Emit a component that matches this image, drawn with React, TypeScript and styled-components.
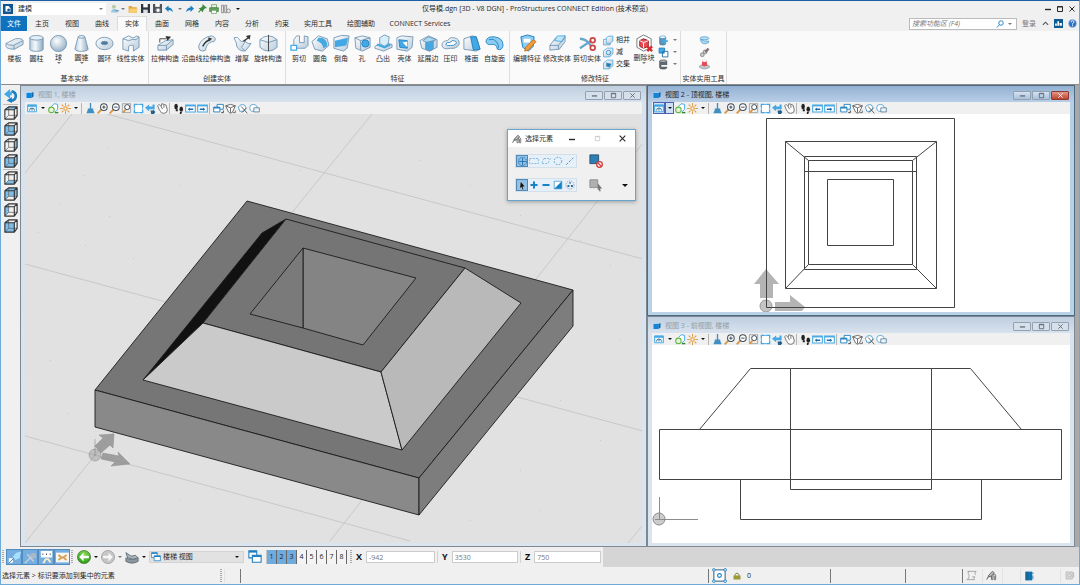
import React from "react";
import styled, { createGlobalStyle, css } from "styled-components";

const GlobalStyle = createGlobalStyle`
  *, *::before, *::after { box-sizing: border-box; }
  html, body { margin: 0; padding: 0; }
  body {
    font-family: "Open Sans", "Noto Sans CJK SC", sans-serif;
    font-size: 7px;
    line-height: 10px;
    color: #2a2a2a;
    background: #f0f0f0;
  }
  button, input, select { font: inherit; color: inherit; margin: 0; padding: 0; border: 0; background: none; }
  h1, h2 { margin: 0; font: inherit; }
`;

/* ------------------------------------------------------------------ */
/* Icons                                                              */
/* ------------------------------------------------------------------ */

const outline = "#6f93b0";
const sky = "#43a8e4";
const deep = "#1c7fc0";

const GradientDefs = () => (
  <HiddenSvg aria-hidden="true">
    <defs>
      <linearGradient id="steel" x1="0" y1="0" x2="1" y2="1">
        <stop offset="0" stopColor="#ffffff" />
        <stop offset="1" stopColor="#b7cbdb" />
      </linearGradient>
      <linearGradient id="tube" x1="0" y1="0" x2="1" y2="0">
        <stop offset="0" stopColor="#b4cadb" />
        <stop offset="0.4" stopColor="#f4f9fc" />
        <stop offset="1" stopColor="#8fabc1" />
      </linearGradient>
      <radialGradient id="ball" cx="0.4" cy="0.35" r="0.7">
        <stop offset="0" stopColor="#ffffff" />
        <stop offset="1" stopColor="#93aec4" />
      </radialGradient>
      <radialGradient id="green" cx="0.5" cy="0.3" r="0.7">
        <stop offset="0" stopColor="#8fdc5c" />
        <stop offset="1" stopColor="#259a17" />
      </radialGradient>
    </defs>
  </HiddenSvg>
);

const large = { stroke: outline, strokeWidth: 0.9, strokeLinejoin: "round" as const };

/* Ribbon icons, 20 x 20 */
const ribbonIcons: Record<string, React.ReactNode> = {
  slab: <g {...large} fill="url(#steel)"><path d="M1 10 11 5q7-1 8 2v4l-9 5q-8 0-9-3z" /><path d="M1 10q2 2 8 2l10-5M9.500 12v4" fill="none" /></g>,
  cylinder: <g {...large} fill="url(#tube)"><path d="M3 4v12c0 3 14 3 14 0V4z" /><ellipse cx="10" cy="4" rx="7" ry="2.400" fill="#e6eff5" /></g>,
  sphere: <circle cx="10" cy="10" r="8.500" {...large} fill="url(#ball)" />,
  cone: <g {...large} fill="url(#tube)"><path d="M6.500 3 3 16c1 3 13 3 14 0L13.500 3z" /><ellipse cx="10" cy="3" rx="3.500" ry="1.400" fill="#e6eff5" /></g>,
  torus: <g {...large} fill="url(#steel)"><ellipse cx="10" cy="10" rx="9" ry="6.500" /><ellipse cx="10" cy="9.500" rx="3.600" ry="1.800" fill="#4f7b9c" /></g>,
  linear: <g {...large} fill="url(#steel)"><path d="M2 5 8 2l4 2q3 0 4-2l3 1v11l-6 4v-6q-2-1-5 1v5l-6-2z" /><path d="M2 5l6 2q4-2 8-1l3-3" fill="none" /></g>,
  extrude: <g {...large} fill="url(#steel)"><path d="m2 12 8-5 8-1v5l-7 6H2z" /><path d="M2 12h9l7-6M11 12v5" fill="none" /><path d="M4 9V5h7" fill="none" stroke="#333" /><path d="m10 2 6 1-4 4z" fill="#333" stroke="none" /></g>,
  sweep: <g {...large} fill="url(#steel)"><path d="M3 17C-1 12 6 3 15 2c5 1 5 4 3 6-5 0-8 3-9 9q-3 2-6 0z" /><path d="M6 13q3-6 8-7" fill="none" stroke="#333" strokeWidth="1.500" /><path d="m12 3.500 4 1.500-4 3z" fill="#333" stroke="none" /></g>,
  thicken: <g {...large} fill="url(#steel)"><path d="M1 4q4-2 6 2t5 0l4 6-4 6q-6 0-8-5 0-4-3-9z" /><path d="m9 14 4-6q3 3 6 2l-6 8z" /><path d="m11 8 5-4" stroke="#333" strokeWidth="1.400" /><path d="m13.500 2 5-1-1 5z" fill="#333" stroke="none" /></g>,
  revolve: <g {...large} fill="url(#steel)"><path d="M1 6q4-4 9-4t9 4v8q-4 4-9 4t-9-4z" /><path d="m1 6 9 3 9-3" fill="none" /><path d="M10 1v17" stroke="#333" /></g>,
  cut: <g {...large} fill="url(#steel)"><path d="M4 6 7 2h3v7h5V2l4 1v9l-3 3H4z" /><path d="M1 12h6v5H1z" fill="#fff" stroke={sky} strokeWidth="1.400" /></g>,
  fillet: <g {...large}><path d="m1 8 7-6 9 3 2 7-7 6-8-2z" fill="url(#steel)" /><path d="M8 4q9-1 9 9l-4 2q-1-6-7-8z" fill={sky} stroke="none" /></g>,
  chamfer: <g {...large}><path d="M2 4q8-4 16-2l-2 13-4 3-10-3z" fill="url(#steel)" /><path d="m3 7 14-3-2 8-12 2z" fill={sky} stroke="none" /></g>,
  hole: <g {...large}><path d="M2 4 10 2l8 2v10l-8 4-7-3z" fill="url(#steel)" /><path d="m2 4 6 3 10-3M8 7v10" fill="none" /><circle cx="13" cy="10" r="3.800" fill={sky} stroke={deep} /></g>,
  boss: <g {...large}><path d="m1 13 8-4 10 2v3l-9 4-9-3z" fill="url(#steel)" /><path d="m6 4 5-3 5 2-1 7-4 3-5-3z" fill="#d8eefa" /><path d="m3 11 8 3 6-3" fill="none" stroke={sky} strokeWidth="2.400" /></g>,
  shell: <g {...large}><path d="m2 4 5-2 12 1-1 11-5 4-11-2z" fill="url(#steel)" /><path d="m4 6 9 1v8l-8-1z" fill={sky} stroke={deep} /><path d="m8 9 5-1v6z" fill="#fff" stroke="none" /></g>,
  extendEdge: <g {...large}><path d="m1 7 9-5 9 4v8l-8 4-8-3z" fill="url(#steel)" /><path d="m4 7 6-4 8 3-7 4z" fill="#a9dcf7" /><path d="m7 9 8-2v9l-4 2-4-2z" fill={sky} /></g>,
  imprint: <g {...large}><path d="M1 12q0-5 6-5 2-4 7-3 6 1 5 7-3 5-9 4-8 2-9-3z" fill="url(#steel)" /><path d="M5 11q1-3 4-2l3-2q5 0 4 3-3 3-6 2-4 1-5-1z" fill="#fff" stroke={deep} /></g>,
  taper: <g {...large}><path d="m2 5 9-3 4 1 4 13-4 2-13-2z" fill="url(#steel)" /><path d="m9 3 6 0 4 13-7 1z" fill={sky} stroke={deep} /></g>,
  spin: <g {...large}><path d="M1 8q1-6 9-5 9 1 9 9-1 6-6 4-1-6-6-5-5 1-6-3z" fill="#8cccf0" stroke={deep} /><path d="M4 6q5-2 8 2t2 7" fill="none" stroke={deep} /></g>,
  editFeature: <g><path d="m3 3 7-2 7 2-1 10-5 5-6-4z" fill="#8ecdf0" stroke={deep} /><path d="M6 5h7v4H6z" fill="#fff" /><path d="m16 6 3 2-8 9-4 1 1-4z" fill="#f39a32" stroke="#b7641a" strokeWidth=".8" /></g>,
  modifySolid: <g {...large}><path d="m2 12 6-8 10-2v6l-6 8-10 1z" fill="url(#steel)" /><path d="m7 7 3-5 8 0-3 6z" fill="#bfe5fa" stroke={sky} /><path d="M2 12h9l7-9M11 12v4" fill="none" /></g>,
  cutSolid: <g fill="none" strokeWidth="1.500"><path d="M2 5q7 0 12 8M2 15q3-2 12-8" stroke="#6aa6cc" strokeWidth="2.400" /><circle cx="15.500" cy="6.500" r="2.500" stroke="#cc4545" strokeWidth="1.800" /><circle cx="15.500" cy="14.500" r="2.500" stroke="#cc4545" strokeWidth="1.800" /></g>,
  deleteBlock: <g><path d="m2 5 7-4 8 4v9l-8 4-7-4z" fill="#fff" stroke="#777" /><path d="m5 7 4-2 5 2v6l-5 2-4-2z" fill="#ef4a52" stroke="#8d1d24" /><path d="m5 7 4 2 5-2M9 9v6" stroke="#fff" fill="none" /><path d="m13 13 5 5m0-5-5 5" stroke="#d62a31" strokeWidth="2.400" /></g>,
  union: <g {...large} fill="url(#steel)"><path d="M1 8h12v10H1z" strokeWidth="1.400" /><path d="m6 5 5-3h7v9l-5 4H6z" stroke={sky} strokeWidth="1.400" /></g>,
  subtract: <g {...large} fill="url(#steel)"><path d="M1 7 8 2h10v10l-6 6H1z" stroke={sky} strokeWidth="1.400" /><circle cx="10" cy="10" r="4" stroke={deep} strokeWidth="1.400" /></g>,
  intersect: <g {...large} fill="url(#steel)"><path d="M1 7 8 2h10v10l-6 6H1z" stroke={sky} strokeWidth="1.400" /><path d="m6 7 9 2-3 6-6-2z" fill={deep} /></g>,
  drumAdd: <g><path d="M3 4v12c0 3 11 3 11 0V4z" fill="#5f95ba" stroke="#2f5e80" /><ellipse cx="8.500" cy="4" rx="5.500" ry="2.400" fill="#fff" stroke={deep} /><path d="M13 6v10M8 11h10" stroke={sky} strokeWidth="3" /></g>,
  blocks: <g strokeWidth="1.600"><path d="M2 2h10v9H2z" fill={sky} stroke={deep} /><path d="M8 8h10v10H8z" fill="#fff" stroke="#246b9d" /><path d="M8 8h4v4H8z" fill={deep} /></g>,
  drumCut: <g fill="#626b73" stroke="#30363b"><path d="M3 4v12c0 3 13 3 13 0V4z" /><ellipse cx="9.500" cy="4" rx="6.500" ry="2.400" fill="#aab2b8" /><path d="M6 11h12v3H6z" fill="#fff" stroke="none" /></g>,
  swirl: <g fill="#b7def2" stroke={deep}><ellipse cx="10" cy="6" rx="8" ry="3" /><path d="M3 8q0 8 8 8 8-1 7-5-9 2-15-3z" /></g>,
  chain: <g fill="#ccc" stroke="#555"><circle cx="6" cy="14" r="3.500" /><circle cx="11" cy="9" r="3.500" /><path d="m11 7 5-5 2 3-5 5z" fill="#9b6f73" /></g>,
  stamp: <g><path d="M1 13q9-6 18 0v2q-9 6-18 0z" fill="#c2cbd4" stroke="#6d7881" /><path d="M6 3q4-3 8 0l1 9q-5 3-10 0z" fill="#e24d55" /><ellipse cx="10" cy="3.500" rx="4" ry="2" fill="#fff" /></g>,
};

/* View, quick access and status icons, 16 x 16 */
const smallIcons: Record<string, React.ReactNode> = {
  viewAttr: <g><path d="M1 3h14v11H1z" fill="#e9f6fd" stroke={sky} strokeWidth="1.500" /><path d="M1 3h14v3H1z" fill={sky} /><path d="M4 12q0-4 4-4t4 4M8 8v4" fill="none" stroke="#3c6b8a" strokeWidth="1.400" /></g>,
  display: <g><path d="M5 5 9 1l5 1v7l-4 4" fill="#fff" stroke={sky} strokeWidth="1.400" /><circle cx="5" cy="10" r="4" fill="#e4f5da" stroke="#67b544" strokeWidth="1.500" /><path d="M10 13h5v2h-5z" fill="#2d8a2d" /></g>,
  sun: <g stroke="#e39a3b" strokeWidth="1.500"><path d="M8 0v4M8 12v4M0 8h4M12 8h4M2.500 2.500l2.500 2.500M11 11l2.500 2.500M13.500 2.500 11 5M2.500 13.500 5 11" /><circle cx="8" cy="8" r="2.500" fill="#fff3dd" /></g>,
  brush: <g fill="#3f8fc0"><path d="M7 0h2v9H7z" /><path d="M4 8h8v2l2 5H2l2-5z" /></g>,
  zoomIn: <g fill="none"><path d="m1 15 6-6" stroke="#dc943c" strokeWidth="2.600" /><circle cx="10" cy="6" r="4.800" stroke="#3c4b57" strokeWidth="1.500" fill="#fff" /><path d="M10 3.500v5M7.500 6h5" stroke="#3c4b57" strokeWidth="1.400" /></g>,
  zoomOut: <g fill="none"><path d="m1 15 6-6" stroke="#dc943c" strokeWidth="2.600" /><circle cx="10" cy="6" r="4.800" stroke="#3c4b57" strokeWidth="1.500" fill="#fff" /><path d="M7.500 6h5" stroke="#3c4b57" strokeWidth="1.400" /></g>,
  zoomArea: <g fill="none"><path d="M2 1h12v13H2z" stroke="#888" /><path d="m3 14 4-5" stroke="#dc943c" strokeWidth="2.500" /><circle cx="9" cy="6" r="3.700" stroke="#3c4b57" strokeWidth="1.400" fill="#fff" /></g>,
  fit: <g fill="#fff" stroke={sky} strokeWidth="1.900"><path d="M2 2h12v12H2z" /><path d="M6 1h4M6 15h4M1 6v4M15 6v4" stroke="#d8effb" /></g>,
  rotate: <g fill={deep}><path d="m0 7 6-5v3h5V2h3v7H6v3z" fill={sky} /><path d="M8 11h4V9l3 4-2 3H9z" fill="#245f88" /></g>,
  pan: <g fill="#fff" stroke="#666" strokeWidth="1.300"><path d="M3 9 1 4l2-2 3 3 1-4 6 2 2 7q0 5-5 5T5 12z" /><path d="M6 5 8 9M10 3v4" /></g>,
  walk: <g fill="#222"><ellipse cx="4.500" cy="5" rx="2.600" ry="4" /><path d="M4 9h3v3H4z" /><ellipse cx="12" cy="9" rx="2.600" ry="3.800" /><path d="M10 13h3l-1 3h-2z" /></g>,
  prev: <g><path d="M1 3h14v10H1z" fill="#fff" stroke={sky} strokeWidth="1.500" /><path d="M1 3h14v2H1z" fill={sky} /><path d="m4 9 3-2.500V8h5v2H7v1.500z" fill="#246b9d" /></g>,
  next: <g><path d="M1 3h14v10H1z" fill="#fff" stroke={sky} strokeWidth="1.500" /><path d="M1 3h14v2H1z" fill={sky} /><path d="M12 9 9 6.500V8H4v2h5v1.500z" fill="#246b9d" /></g>,
  copyView: <g fill="#fff" stroke={deep} strokeWidth="1.300"><path d="M6 2h9v7H6z" /><path d="M1 6h9v7H1z" /><path d="M1 7h9" strokeWidth="2" /><path d="M12 14h3v-3" stroke="#333" /></g>,
  clip: <g fill="#fff" stroke="#555" strokeWidth="1.200"><path d="m1 4 7-2 7 2-4 9-3 2-3-2z" /><path d="m1 4 7 3 7-3M8 7v7" fill="none" /><path d="M11 14h4v-3" /></g>,
  clipVol: <g fill="none" strokeWidth="1.300"><path d="M2 6q3-5 9-3l2 4-3 5H4z" stroke="#4b9cca" fill="#fff" /><path d="m6 5 9 10M14 7 7 14" stroke="#555" /></g>,
  clipMask: <g strokeWidth="1.300"><path d="M1 7q0-5 5-5t6 4l-3 6H4Q1 11 1 7z" fill="#fff" stroke="#5ba6d0" /><path d="M7 7h8v6H7z" fill="#f4f6f8" stroke="#5a86a3" /></g>,
  logo: <g><path d="M0 0h16v16H0z" fill="#10558f" /><path d="M4 3h5l3 4v5H4z" fill="#fff" /><path d="m7 8 3-1 2 2-2 2H7z" fill="#10558f" /></g>,
  users: <g><circle cx="7" cy="5" r="3.500" fill="#b7cda2" /><path d="M2 15q0-6 6-6t6 6z" fill="#9cc7df" /><path d="M9 12h7" stroke="#6c99b5" strokeWidth="2" /></g>,
  folder: <g><path d="M1 3h5l1 2h7v9H1z" fill="#e5a63a" /><path d="M3 7h13l-3 7H1z" fill="#f9cf74" /></g>,
  save: <g><path d="M0 0h16v16H0z" fill="#2f3640" /><path d="M4 0h8v6H4z" fill="#fff" /><path d="M4 10h8v6H4z" fill="#dbe0e5" /></g>,
  saveSet: <g><path d="M0 0h16v16H0z" fill="#4b535c" /><path d="M4 0h8v5H4z" fill="#fff" /><circle cx="9" cy="11" r="4" fill="#fff" stroke="#6b7580" strokeWidth="2" /></g>,
  undo: <path d="m0 7 7-6v4q7 0 9 9-4-4-9-4v4z" fill={deep} />,
  redo: <path d="M16 7 9 1v4q-7 0-9 9 4-4 9-4v4z" fill={deep} />,
  pin: <g fill="#3b8b40"><path d="m8 0 8 7-4 1-3 4v3L1 7h3l4-3z" /><path d="m6 9-5 6" stroke="#3b8b40" strokeWidth="1.800" /></g>,
  print: <g><path d="M4 1h8v5H4z" fill="#e9f6df" stroke="#4b8b47" /><path d="M1 6h14v6H1z" fill="#63a55a" stroke="#3f6f3b" /><path d="M4 10h8v5H4z" fill="#fff" stroke="#4b8b47" /></g>,
  report: <g fill="#eee" stroke="#777" strokeWidth="1.200"><path d="M1 2h3v12H1zM6 2h3v12H6z" /><circle cx="12" cy="11" r="3" /></g>,
  search: <g fill="none" stroke={deep} strokeWidth="1.800"><circle cx="10" cy="6" r="4.500" /><path d="m2 15 5-6" /></g>,
  connect: <g><path d="M0 0h16v16H0z" fill="#0e5a93" /><path d="M2 12V8h3v4zM6 12V4h3v8zM10 12V7h4v5z" fill="#fff" /></g>,
  help: <g><circle cx="8" cy="8" r="7" fill="#2d6fc4" stroke="#a5c6ec" /><path d="M5.500 6q0-3 2.500-3t2.500 2.500Q10.500 7 8 8v2M8 11v2" fill="none" stroke="#fff" strokeWidth="1.600" /></g>,
  cube: <g><path d="M1 4h10v10H1z" fill="#0f86dc" /><path d="m1 4 4-2h10l-4 2z" fill="#9bd6f8" /><path d="m11 4 4-2v9l-4 3z" fill="#0b66ad" /></g>,
  accu: <g><path d="m6 7 4-5 6-1-2 8-5 2z" fill="#a7e0ff" /><path d="M1 15V9h5v5z" fill="#fff" /><path d="m1 15 6-6" stroke="#2b699b" /></g>,
  snapOff: <g stroke="#c7d0d8" strokeWidth="1.800" fill="none"><path d="M1 15 13 3M4 4l8 9" /><path d="m7 4 5-2 3 2v4l-4 2z" fill="#aab8c4" stroke="none" /></g>,
  dots: <g><path d="M1 0h14v8H1z" fill="#fff" /><path d="M3 4h1M7.500 4h1M12 4h1" stroke="#333" strokeWidth="2" /><path d="m4 15 3-5h3l3 4" fill="none" stroke="#f8ecc7" strokeWidth="2.400" /></g>,
  tags: <g><path d="M0 2h16v12H0z" fill="#f5f5f2" /><path d="m3 5 4 3-4 3M13 5 9 8l4 3M6 8h4" fill="none" stroke="#d99e4d" strokeWidth="2.200" /></g>,
  back: <g><circle cx="8" cy="8" r="7.500" fill="url(#green)" stroke="#46792e" strokeWidth=".8" /><path d="m2.500 8 5-5v3.500h6v3h-6V13z" fill="#fff" /></g>,
  forward: <g><circle cx="8" cy="8" r="7.500" fill="#c6c6c6" stroke="#969696" strokeWidth=".8" /><path d="m13.500 8-5-5v3.500h-6v3h6V13z" fill="#f7f7f7" /></g>,
  model: <g fill="#8b97a1" stroke="#606d78"><path d="M1 9q7 4 14 0v4q-7 4-14 0z" /><path d="M3 9 1 3l6 4 5-1 3 3q-6 3-12 0z" fill="#a7b2bb" /></g>,
  windows: <g fill="#fff" stroke={deep} strokeWidth="1.200"><path d="M1 1h9v8H1z" /><path d="M1 2h9" strokeWidth="2" /><path d="M5 6h10v8H5z" /><path d="M5 7h10" strokeWidth="2" /></g>,
  lock: <g><path d="M4 8V5q4-6 8 0v3" fill="none" stroke="#77782f" strokeWidth="1.800" /><path d="M1 7h14v8H1z" fill="#9a9b35" /></g>,
  snap: <g fill="#fff" stroke={deep}><path d="M2 2h12v12H2z" stroke="#22567a" /><circle cx="8" cy="8" r="2" strokeWidth="1.200" /><circle cx="2" cy="2" r="1.400" /><circle cx="14" cy="2" r="1.400" /><circle cx="2" cy="14" r="1.400" /><circle cx="14" cy="14" r="1.400" /></g>,
  sheet: <g fill="none" stroke="#999" strokeWidth="1.200"><path d="M2 2h13M1 14h12M4 2q-2 3 0 5t-2 7M14 2q-2 3 0 5M9 10h4l-2 3" /></g>,
  fence: <g fill="none" stroke="#666" strokeWidth="1.300"><path d="M1 14q1-5 5-5M3 9l6-7 3 2-5 6z" fill="#bbb" /><path d="M8 8v6h2V8q0-2 2-2t2 2v6h-2V8" /></g>,
  book: <g><path d="M2 1h11v14H2z" fill="#1272a8" /><path d="M13 2h2v3h-2zM13 7h2v6h-2z" fill="#4e9ac4" /><path d="M5 1v14" stroke="#0b517b" /></g>,
  faded: <g fill="#e2e2e2" stroke="#a5a5a5"><path d="M3 3h9v10H3z" /><circle cx="8" cy="8" r="2.500" /><path d="M12 4h2v7" /></g>,
  selEach: <g fill="none" stroke="#1d6aa5" strokeWidth="1.200"><circle cx="8" cy="8" r="6" strokeDasharray="2 1" /><path d="M8 3v10M3 8h10" /></g>,
  selBlock: <path d="M1 4h14v8H1z" fill="none" stroke="#63a9d4" strokeDasharray="3 2" strokeWidth="1.200" />,
  selShape: <path d="M5 4h10l-4 8H1z" fill="none" stroke="#63a9d4" strokeDasharray="3 2" strokeWidth="1.200" />,
  selCircle: <circle cx="8" cy="8" r="6" fill="none" stroke="#3c8fc4" strokeDasharray="3 2" strokeWidth="1.200" />,
  selLine: <path d="M2 14 14 2" fill="none" stroke="#3c8fc4" strokeDasharray="4 2" strokeWidth="1.400" />,
  cursor: <path d="m6 3 6 7-3 .5 1.500 3-2 .8L7 11l-2 2z" fill="#111" stroke="#fff" strokeWidth=".5" />,
  plus: <path d="M8 1v14M1 8h14" stroke="#1681c4" strokeWidth="4" />,
  minus: <path d="M1 8h14" stroke="#1681c4" strokeWidth="4" />,
  invert: <g><path d="M2 2h12v12H2z" fill="#fff" stroke="#1681c4" /><path d="M14 2v12H2z" fill="#1681c4" /></g>,
  all: <g fill="#1d6aa5"><circle cx="8" cy="8" r="6.500" fill="none" stroke="#777" strokeDasharray="2 1.500" /><path d="M7 3h2v3H7zM4 8h3v3H4zM9.500 8h3v3h-3z" /></g>,
  noSelect: <g><path d="M1 1h10v10H1z" fill="#2d7fb8" stroke="#274c66" /><circle cx="12" cy="12" r="3.200" fill="#fff" stroke="#d33b3b" strokeWidth="1.500" /><path d="m10 10 4 4" stroke="#d33b3b" strokeWidth="1.500" /></g>,
  handles: <g><path d="M1 2h9v9H1z" fill="#b0b0b0" stroke="#8d8d8d" /><path d="m10 6 5 6-2.500.4 1 2.600-1.500.5-1-2.500L10 14z" fill="#777" /></g>,
};

const Svg = styled.svg<{ $size: number }>`
  display: block;
  flex: none;
  width: ${(p) => p.$size}px;
  height: ${(p) => p.$size}px;
`;

const HiddenSvg = styled.svg`
  position: absolute;
  width: 0;
  height: 0;
`;

const SmallIcon = ({ name, size = 11 }: { name: string; size?: number }) => (
  <Svg $size={size} viewBox="0 0 16 16" aria-hidden="true">{smallIcons[name]}</Svg>
);

const RibbonIcon = ({ name, size = 19 }: { name: string; size?: number }) => (
  <Svg $size={size} viewBox="0 0 20 20" aria-hidden="true">{ribbonIcons[name]}</Svg>
);

const Caret = styled.span<{ $muted?: boolean; $size?: number }>`
  flex: none;
  width: 0;
  height: 0;
  border: ${(p) => p.$size ?? 2}px solid transparent;
  border-bottom-width: 0;
  border-top-color: ${(p) => (p.$muted ? "#777" : "#111")};
`;

/* ------------------------------------------------------------------ */
/* Frame, title bar and tabs                                          */
/* ------------------------------------------------------------------ */

const AppFrame = styled.div`
  display: flex;
  flex-direction: column;
  min-height: 100vh;
  border: 1px solid #6fa9d8;
  border-top-color: #1c5fa5;
  background: #f0f0f0;
`;

const TitleBar = styled.header`
  display: grid;
  grid-template-columns: 1fr auto 1fr;
  align-items: center;
  height: 15px;
`;

const QuickAccess = styled.div`
  display: flex;
  align-items: center;
  padding-left: 2px;
`;

const IconButton = styled.button<{ $width?: number }>`
  display: flex;
  flex: none;
  align-items: center;
  justify-content: center;
  width: ${(p) => p.$width ?? 12}px;
  height: 13px;
`;

const WorkflowBox = styled.label`
  display: flex;
  align-items: center;
  width: 90px;
  height: 12px;
  margin: 0 4px 0 3px;
  padding-right: 3px;
  background: #fff;
`;

const PlainSelect = styled.select`
  flex: 1;
  min-width: 0;
  height: 12px;
  padding: 0 2px;
  appearance: none;
  outline: none;
`;

const AppTitle = styled.h1`
  padding-right: 10px;
  white-space: nowrap;
`;

const WindowControls = styled.div`
  display: flex;
  justify-content: flex-end;
  padding-right: 1px;
`;

const ControlGlyph = ({ kind, size = 8 }: { kind: "min" | "max" | "close"; size?: number }) => (
  <Svg $size={size} viewBox="0 0 8 8" fill="none" stroke="currentColor" aria-hidden="true">
    {kind === "min" && <path d="M1 4.500h6" strokeWidth="1.400" />}
    {kind === "max" && <path d="M1.500 1.500h5v5h-5zM1.500 2h5" />}
    {kind === "close" && <path d="m1.500 1.500 5 5m0-5-5 5" />}
  </Svg>
);

const TabBar = styled.nav`
  display: flex;
  align-items: stretch;
  height: 15px;
`;

const Tab = styled.button<{ $kind?: "file" | "active"; $width?: number }>`
  flex: none;
  width: ${(p) => p.$width ?? 30}px;
  white-space: nowrap;
  ${(p) => p.$kind === "file" && css`
    color: #fff;
    background: #0f72bf;
  `}
  ${(p) => p.$kind === "active" && css`
    background: #fafafa;
    border: 1px solid #dcdcdc;
    border-bottom: 0;
  `}
`;

const TabTools = styled.div`
  display: flex;
  align-items: center;
  gap: 2px;
  margin-left: auto;
  padding-right: 1px;
`;

const SearchBox = styled.label`
  display: flex;
  align-items: center;
  gap: 4px;
  width: 108px;
  height: 12px;
  padding: 0 4px 0 2px;
  border: 1px solid #bbb;
  background: #fff;
  input {
    flex: 1;
    min-width: 0;
    height: 10px;
    outline: none;
    font-style: italic;
  }
  input::placeholder { color: #777; opacity: 1; }
`;

const SignIn = styled.button`
  width: 20px;
  color: #777;
`;

/* ------------------------------------------------------------------ */
/* Ribbon                                                             */
/* ------------------------------------------------------------------ */

const Ribbon = styled.section`
  display: flex;
  height: 54px;
  border-bottom: 1px solid #8c8c8c;
  background: #fafafa;
`;

const Group = styled.section<{ $width: number }>`
  display: flex;
  flex: none;
  flex-direction: column;
  width: ${(p) => p.$width}px;
  border-right: 1px solid #dedede;
`;

const GroupTools = styled.div`
  display: flex;
  flex: 1;
  justify-content: center;
  padding-top: 3px;
`;

const GroupTitle = styled.h2`
  height: 10px;
  text-align: center;
  white-space: nowrap;
`;

const Tool = styled.button<{ $width: number }>`
  display: flex;
  flex: none;
  flex-direction: column;
  align-items: center;
  width: ${(p) => p.$width}px;
  height: 36px;
  white-space: nowrap;
`;

const ToolLabel = styled.span<{ $menu?: boolean }>`
  height: ${(p) => (p.$menu ? 9 : 12)}px;
  line-height: ${(p) => (p.$menu ? 9 : 12)}px;
`;

const ToolStack = styled.div<{ $width: number }>`
  display: flex;
  flex: none;
  flex-direction: column;
  width: ${(p) => p.$width}px;
`;

const StackTool = styled.button<{ $center?: boolean }>`
  display: flex;
  align-items: center;
  justify-content: ${(p) => (p.$center ? "center" : "flex-start")};
  gap: ${(p) => (p.$center ? 4 : 2)}px;
  height: 12px;
  padding: 0 0 0 1px;
  white-space: nowrap;
`;

type ToolSpec = { icon: string; label: string; width: number; menu?: boolean };

const RibbonTool = ({ icon, label, width, menu }: ToolSpec) => (
  <Tool $width={width}>
    <RibbonIcon name={icon} />
    <ToolLabel $menu={menu}>{label}</ToolLabel>
    {menu && <Caret $muted />}
  </Tool>
);

const basicTools: ToolSpec[] = [
  { icon: "slab", label: "楼板", width: 22 },
  { icon: "cylinder", label: "圆柱", width: 22 },
  { icon: "sphere", label: "球", width: 22, menu: true },
  { icon: "cone", label: "圆锥", width: 24, menu: true },
  { icon: "torus", label: "圆环", width: 22 },
  { icon: "linear", label: "线性实体", width: 30 },
];
const createTools: ToolSpec[] = [
  { icon: "extrude", label: "拉伸构造", width: 30 },
  { icon: "sweep", label: "沿曲线拉伸构造", width: 52 },
  { icon: "thicken", label: "增厚", width: 20 },
  { icon: "revolve", label: "旋转构造", width: 32 },
];
const featureTools: ToolSpec[] = [
  { icon: "cut", label: "剪切", width: 21 },
  { icon: "fillet", label: "圆角", width: 21 },
  { icon: "chamfer", label: "倒角", width: 21 },
  { icon: "hole", label: "孔", width: 21 },
  { icon: "boss", label: "凸出", width: 21 },
  { icon: "shell", label: "壳体", width: 22 },
  { icon: "extendEdge", label: "延展边", width: 25 },
  { icon: "imprint", label: "压印", width: 20 },
  { icon: "taper", label: "椎面", width: 22 },
  { icon: "spin", label: "自旋面", width: 24 },
];
const modifyTools: ToolSpec[] = [
  { icon: "editFeature", label: "编辑特征", width: 30 },
  { icon: "modifySolid", label: "修改实体", width: 30 },
  { icon: "cutSolid", label: "剪切实体", width: 30 },
];

const RibbonPanel = () => (
  <Ribbon aria-label="实体">
    <Group $width={148}>
      <GroupTools>{basicTools.map((t) => <RibbonTool key={t.label} {...t} />)}</GroupTools>
      <GroupTitle>基本实体</GroupTitle>
    </Group>
    <Group $width={137}>
      <GroupTools>{createTools.map((t) => <RibbonTool key={t.label} {...t} />)}</GroupTools>
      <GroupTitle>创建实体</GroupTitle>
    </Group>
    <Group $width={224}>
      <GroupTools>{featureTools.map((t) => <RibbonTool key={t.label} {...t} />)}</GroupTools>
      <GroupTitle>特征</GroupTitle>
    </Group>
    <Group $width={171}>
      <GroupTools>
        {modifyTools.map((t) => <RibbonTool key={t.label} {...t} />)}
        <ToolStack $width={30}>
          <StackTool><RibbonIcon name="union" size={11} />相并</StackTool>
          <StackTool><RibbonIcon name="subtract" size={11} />减</StackTool>
          <StackTool><RibbonIcon name="intersect" size={11} />交集</StackTool>
        </ToolStack>
        <RibbonTool icon="deleteBlock" label="删除块" width={24} menu />
        <ToolStack $width={22}>
          <StackTool aria-label="添加体" $center><RibbonIcon name="drumAdd" size={11} /><Caret $muted /></StackTool>
          <StackTool aria-label="复制块" $center><RibbonIcon name="blocks" size={11} /><Caret $muted /></StackTool>
          <StackTool aria-label="分割体" $center><RibbonIcon name="drumCut" size={11} /><Caret $muted /></StackTool>
        </ToolStack>
      </GroupTools>
      <GroupTitle>修改特征</GroupTitle>
    </Group>
    <Group $width={46}>
      <GroupTools>
        <ToolStack $width={22}>
          <StackTool aria-label="转换" $center><RibbonIcon name="swirl" size={11} /></StackTool>
          <StackTool aria-label="链" $center><RibbonIcon name="chain" size={11} /></StackTool>
          <StackTool aria-label="压模" $center><RibbonIcon name="stamp" size={11} /></StackTool>
        </ToolStack>
      </GroupTools>
      <GroupTitle>实体实用工具</GroupTitle>
    </Group>
  </Ribbon>
);

/* ------------------------------------------------------------------ */
/* Work area                                                          */
/* ------------------------------------------------------------------ */

const Workspace = styled.main`
  display: flex;
  flex: 1;
  padding-right: 4px;
  background: #a9a9a9;
`;

const Palette = styled.aside`
  display: flex;
  flex: none;
  flex-direction: column;
  align-items: center;
  width: 19px;
  padding-top: 3px;
  background: #f0f0f0;
`;

const PaletteButton = styled.button`
  display: flex;
  align-items: center;
  justify-content: center;
  width: 17px;
  height: 16px;
`;

const PaletteRule = styled.hr`
  width: 15px;
  height: 1px;
  margin: 0;
  border: 0;
  background: #bdbdbd;
`;

const faces: Record<string, string> = {
  top: "M2 5 6 2h9l-3 3z",
  front: "M2 5h10v10H2z",
  right: "m12 5 3-3v9l-3 4z",
  left: "m2 5 4-3v9l-4 4z",
  bottom: "m2 15 4-4h9l-3 4z",
  back: "M6 2h9v9H6z",
};

const ViewCube = ({ faces: shown }: { faces: string[] }) => (
  <Svg $size={16} viewBox="0 0 17 17" aria-hidden="true">
    {shown.map((f) => <path key={f} d={faces[f]} fill="#7dbdea" />)}
    <path d="M6 2v9h9M6 11l-4 4" fill="none" stroke="#666" strokeWidth=".8" />
    <path d="M2 5h10v10H2zM2 5l4-3h9l-3 3M15 2v9l-3 4" fill="none" stroke="#333" strokeWidth="1.200" strokeLinejoin="round" />
  </Svg>
);

const ViewGrid = styled.div`
  display: grid;
  flex: 1;
  grid-template-columns: minmax(0, 627fr) minmax(0, 428fr);
  grid-template-rows: 1fr 1fr;
  min-width: 0;
`;

const ViewWindow = styled.section<{ $tall?: boolean; $focused?: boolean }>`
  position: relative;
  display: flex;
  flex-direction: column;
  min-width: 0;
  min-height: 0;
  padding: 0 4px 3px;
  border: 1px solid ${(p) => (p.$focused ? "#4c6a80" : "#7f8890")};
  background: ${(p) =>
    p.$focused
      ? "linear-gradient(#93b1d3, #b8cee6 16px, #b9d3e6)"
      : "linear-gradient(#bfcfdf, #d8e2ee 16px, #dbe5ef)"};
  ${(p) => p.$tall && css`grid-row: 1 / 3;`}
`;

const ViewHeader = styled.header<{ $focused?: boolean }>`
  display: flex;
  align-items: center;
  gap: 4px;
  height: 16px;
  padding: 2px 1px 0;
  color: ${(p) => (p.$focused ? "#222" : "#949da6")};
`;

const ViewName = styled.h2`
  flex: 1;
  white-space: nowrap;
`;

const FrameButtons = styled.div`
  display: flex;
  gap: 1px;
`;

const FrameButton = styled.button<{ $tone?: "focused" | "danger" }>`
  display: flex;
  align-items: center;
  justify-content: center;
  width: 18px;
  height: 9px;
  border: 1px solid ${(p) => (p.$tone === "danger" ? "#8e3b32" : "#92a0b0")};
  border-radius: 1px;
  color: ${(p) => (p.$tone === "danger" ? "#fff" : "#5c6773")};
  background: ${(p) =>
    p.$tone === "danger" ? "linear-gradient(#e0988b, #c2402b)" : p.$tone === "focused" ? "linear-gradient(#d5e2f1, #a9c1dd)" : "#d6e0eb"};
`;

const ViewTools = styled.div`
  display: flex;
  align-items: center;
  height: 12px;
  padding-left: 1px;
  background: #f0f0f0;
`;

const ViewToolButton = styled.button<{ $slim?: boolean; $on?: boolean }>`
  display: flex;
  flex: none;
  align-items: center;
  justify-content: center;
  width: ${(p) => (p.$slim ? 9 : 12)}px;
  height: 12px;
  ${(p) => p.$on && css`
    border: 1px solid #4e62ae;
    background: #cfe2f5;
  `}
`;

const ToolRule = styled.span`
  width: 1px;
  height: 11px;
  margin: 0 2px 0 1px;
  background: #b5b5b5;
`;

const Canvas = styled.svg<{ $shade?: boolean }>`
  display: block;
  flex: 1;
  width: 100%;
  min-height: 0;
  background: ${(p) => (p.$shade ? "#e1e1e1" : "#fff")};
`;

const viewToolOrder = [
  ["brush", "更新视图"], ["zoomIn", "放大"], ["zoomOut", "缩小"], ["zoomArea", "窗口缩放"], ["fit", "全景视图"], ["rotate", "旋转视图"], ["pan", "平移视图"],
  ["|", "a"], ["walk", "漫游"], ["prev", "上一视图"], ["next", "下一视图"],
  ["|", "b"], ["copyView", "复制视图"], ["clip", "视图透视"], ["clipVol", "剪切立方体"], ["clipMask", "剪切遮罩"],
];

const DrawingView = ({ title, focused, tall, children }: { title: string; focused?: boolean; tall?: boolean; children: React.ReactNode }) => (
  <ViewWindow $focused={focused} $tall={tall} aria-label={title}>
    <ViewHeader $focused={focused}>
      <SmallIcon name="cube" size={8} />
      <ViewName>{title}</ViewName>
      <FrameButtons>
        <FrameButton aria-label="最小化" $tone={focused ? "focused" : undefined}><ControlGlyph kind="min" size={7} /></FrameButton>
        <FrameButton aria-label="最大化" $tone={focused ? "focused" : undefined}><ControlGlyph kind="max" size={7} /></FrameButton>
        <FrameButton aria-label="关闭" $tone={focused ? "danger" : undefined}><ControlGlyph kind="close" size={7} /></FrameButton>
      </FrameButtons>
    </ViewHeader>
    <ViewTools>
      <ViewToolButton aria-label="视图属性" $on={focused}><SmallIcon name="viewAttr" size={10} /></ViewToolButton>
      <ViewToolButton aria-label="视图属性选项" $slim $on={focused}><Caret /></ViewToolButton>
      <ViewToolButton aria-label="显示样式"><SmallIcon name="display" /></ViewToolButton>
      <ViewToolButton aria-label="亮度"><SmallIcon name="sun" /></ViewToolButton>
      <ViewToolButton aria-label="亮度选项" $slim><Caret /></ViewToolButton>
      <ToolRule />
      {viewToolOrder.map(([name, label]) =>
        name === "|" ? <ToolRule key={label} /> : (
          <ViewToolButton key={label} aria-label={label}><SmallIcon name={name} /></ViewToolButton>
        ),
      )}
    </ViewTools>
    {children}
  </ViewWindow>
);

const gridDots = [
  [107, 147], [83, 175], [60, 204], [109, 216], [38, 232], [85, 245], [133, 258], [180, 185], [226, 150], [300, 170],
  [350, 140], [420, 160], [470, 185], [520, 215], [580, 240], [610, 265], [620, 340], [560, 400], [600, 440], [520, 470],
  [470, 520], [300, 510], [180, 500], [68, 413], [50, 360], [540, 510],
];

const IsometricDrawing = () => (
  <Canvas $shade viewBox="25 114 617 429" preserveAspectRatio="xMinYMin slice" role="img" aria-label="楼梯">
    <g stroke="#c2c2c2" strokeWidth="0.8" fill="none">
      <path d="M25 173 72 114M25 543 95 455 372 114M330 541 643 143M628 543 643 525" />
      <path d="M107 114 643 259M25 264 643 431M25 436 410 541" />
    </g>
    {gridDots.map(([x, y]) => <rect key={`${x}-${y}`} x={x} y={y} width="1" height="1" fill="#c8c8c8" />)}
    <g stroke="#1c1c1c" strokeWidth="0.9" strokeLinejoin="round">
      <path d="M247 201 573 290 419 478 95 390z" fill="#767676" />
      <path d="M95 390 419 478v37L95 427z" fill="#898989" />
      <path d="M573 290v36L419 515v-37z" fill="#7d7d7d" />
      <path d="M286 219 262 233 143 380 203 323z" fill="#111" />
      <path d="M286 219 465 268 381 372 203 323z" fill="#757575" />
      <path d="M203 323 381 372 402 450 143 380z" fill="#cacaca" />
      <path d="M465 268 521 303 402 450 381 372z" fill="#b9b9b9" />
      <path d="M303 248 416 278 363 345 303 328z" fill="#848484" />
      <path d="M303 248v80l-53-14z" fill="#7a7a7a" />
    </g>
    <g fill="#8d8d8d" fillOpacity="0.8" stroke="#8a8a8a" strokeWidth="0.5">
      <path d="m95 446 8-8-4-3 15-1-1 14-3-3-9 8z" />
      <path d="m103 453 16 3-1-4 12 12-19 2 4-4-14-3z" />
      <circle cx="95" cy="455" r="6" fillOpacity="0.4" />
      <path d="M95 439v17" stroke="#777" />
    </g>
  </Canvas>
);

const TopDrawing = () => (
  <Canvas viewBox="652 114 418 198" preserveAspectRatio="xMidYMid meet" role="img" aria-label="顶视图">
    <g fill="#b4b4b4">
      <path d="M766 269 779 284h-6v14h-13v-14h-6z" />
      <path d="M775 302h15v-7l15 12-3 4h-27z" />
      <circle cx="766" cy="306" r="6" fill="#c4c4c4" stroke="#999" />
    </g>
    <g fill="none" stroke="#444">
      <path d="M766.500 118.500h188v189h-188zM785.500 141.500h151v147h-151zM804.500 156.500h112v113h-112zM808.500 160.500h104v104h-104zM827.500 179.500h66v66h-66z" />
      <path d="m785.500 141.500 23 19M936.500 141.500l-24 19M785.500 288.500l23-24M936.500 288.500l-24-24M804.500 171.500h112" />
    </g>
  </Canvas>
);

const FrontDrawing = () => (
  <Canvas viewBox="652 345 418 198" preserveAspectRatio="xMidYMid meet" role="img" aria-label="前视图">
    <g fill="none" stroke="#444">
      <path d="m699.500 429.500 51-61h220l51 61" />
      <path d="M659.500 429.500h402v50h-402zM790.500 368.500v121h141v-121M740.500 479.500v40h241v-40" />
    </g>
    <g stroke="#8c8c8c" fill="#aaa" fillOpacity="0.6">
      <circle cx="659" cy="519" r="6" />
      <path d="M659.500 497v23M655 519.500h43" />
    </g>
  </Canvas>
);

/* Floating selection settings */

const Dialog = styled.section`
  position: absolute;
  top: 43px;
  right: 10px;
  width: 129px;
  height: 72px;
  border: 1px solid #6aa5cf;
  background: #f0f0f0;
  box-shadow: 0 1px 4px rgba(0, 0, 0, 0.3);
`;

const DialogHeader = styled.header`
  display: flex;
  align-items: center;
  gap: 3px;
  height: 17px;
  padding: 0 0 0 4px;
  background: #fff;
`;

const DialogBody = styled.div`
  display: grid;
  grid-template-columns: 62px 38px 1fr;
  align-items: center;
  row-gap: 10px;
  padding: 7px 0 0 7px;
`;

const ToggleStrip = styled.div`
  display: flex;
  height: 14px;
  border: 1px solid #d3e0ea;
  background: #e7f0f8;
`;

const Toggle = styled.button<{ $on?: boolean }>`
  display: flex;
  align-items: center;
  justify-content: center;
  width: 12px;
  height: 12px;
  ${(p) => p.$on && css`
    background: #8fc0e8;
    box-shadow: 0 0 0 1px #5589b5 inset;
  `}
`;

const DialogAction = styled.button`
  display: flex;
  align-items: center;
  justify-content: center;
  height: 14px;
`;

const DialogTitle = styled.h2`
  flex: 1;
  white-space: nowrap;
`;

const FadedGlyph = styled.span`
  color: #ccc;
`;

const SelectionDialog = () => (
  <Dialog role="dialog" aria-label="选择元素">
    <DialogHeader>
      <SmallIcon name="fence" size={10} />
      <DialogTitle>选择元素</DialogTitle>
      <IconButton $width={25} aria-label="最小化"><ControlGlyph kind="min" /></IconButton>
      <IconButton $width={20} aria-label="最大化" disabled><FadedGlyph><ControlGlyph kind="max" size={7} /></FadedGlyph></IconButton>
      <IconButton $width={25} aria-label="关闭"><ControlGlyph kind="close" size={9} /></IconButton>
    </DialogHeader>
    <DialogBody>
      <ToggleStrip>
        <Toggle $on aria-label="逐个"><SmallIcon name="selEach" /></Toggle>
        <Toggle aria-label="块"><SmallIcon name="selBlock" size={10} /></Toggle>
        <Toggle aria-label="形状"><SmallIcon name="selShape" size={10} /></Toggle>
        <Toggle aria-label="圆"><SmallIcon name="selCircle" size={10} /></Toggle>
        <Toggle aria-label="线"><SmallIcon name="selLine" size={10} /></Toggle>
      </ToggleStrip>
      <DialogAction aria-label="禁用句柄"><SmallIcon name="noSelect" size={14} /></DialogAction>
      <span />
      <ToggleStrip>
        <Toggle $on aria-label="新建"><SmallIcon name="cursor" size={12} /></Toggle>
        <Toggle aria-label="添加"><SmallIcon name="plus" size={8} /></Toggle>
        <Toggle aria-label="减去"><SmallIcon name="minus" size={8} /></Toggle>
        <Toggle aria-label="反选"><SmallIcon name="invert" size={10} /></Toggle>
        <Toggle aria-label="全选"><SmallIcon name="all" size={10} /></Toggle>
      </ToggleStrip>
      <DialogAction aria-label="句柄"><SmallIcon name="handles" size={14} /></DialogAction>
      <DialogAction aria-label="更多选项"><Caret $size={3} /></DialogAction>
    </DialogBody>
  </Dialog>
);

/* ------------------------------------------------------------------ */
/* Bottom bars                                                        */
/* ------------------------------------------------------------------ */

const BottomBar = styled.div`
  display: flex;
  align-items: stretch;
  height: 20px;
  background: #d5d5d5;
`;

const BarSection = styled.div`
  display: flex;
  align-items: center;
  background: #f0f0f0;
`;

const Grip = styled.span`
  width: 2px;
  height: 14px;
  margin: 0 2px 0 1px;
  background: repeating-linear-gradient(#aaa 0 1px, transparent 1px 2px);
`;

const LockToggle = styled.button`
  display: flex;
  align-items: center;
  justify-content: center;
  width: 16px;
  height: 16px;
  border: 1px solid #528dc0;
  background: #76ade0;
`;

const ViewGroupBox = styled.label`
  display: flex;
  align-items: center;
  width: 95px;
  height: 12px;
  margin: 0 4px 0 2px;
  padding: 0 4px 0 1px;
  background: #e2e2e2;
  border: 1px solid #d3d3d3;
`;

const ViewNumber = styled.button<{ $on?: boolean }>`
  width: 10px;
  height: 14px;
  border-right: 1px solid #666;
  background: ${(p) => (p.$on ? "#6fabdf" : "#f4f4f4")};
  color: #222;
`;

const NumberStrip = styled.div`
  display: flex;
  margin: 0 2px 0 4px;
  border-left: 1px solid #c5c5c5;
`;

const Coordinate = styled.label`
  display: flex;
  align-items: center;
  gap: 4px;
  width: 83px;
  padding: 0 2px;
  color: #111;
  font-size: 9px;
  font-weight: 700;
  & + & {
    padding-left: 4px;
    border-left: 1px solid #d2d2d2;
  }
  input {
    flex: 1;
    min-width: 0;
    height: 12px;
    padding-left: 2px;
    border: 1px solid #ccc;
    background: #fff;
    color: #777;
    font-size: 7px;
    font-weight: 400;
    outline: none;
  }
`;

const StatusBar = styled.footer`
  display: flex;
  align-items: center;
  height: 17px;
`;

const StatusPrompt = styled.span`
  width: 218px;
  padding-left: 1px;
  white-space: nowrap;
`;

const StatusCell = styled.div<{ $width?: number; $edge?: "dark" | "faint"; $gap?: number }>`
  display: flex;
  flex: ${(p) => (p.$width ? "none" : 1)};
  align-items: center;
  gap: ${(p) => p.$gap ?? 0}px;
  width: ${(p) => (p.$width ? `${p.$width}px` : "auto")};
  height: 14px;
  padding-left: 3px;
  border-left: 1px solid ${(p) => (p.$edge === "faint" ? "#e2e2e2" : "#777")};
`;

export default function App() {
  return (
    <AppFrame>
      <GlobalStyle />
      <GradientDefs />
      <TitleBar>
        <QuickAccess>
          <SmallIcon name="logo" size={10} />
          <WorkflowBox>
            <PlainSelect aria-label="工作流" defaultValue="建模"><option>建模</option></PlainSelect>
            <Caret $muted />
          </WorkflowBox>
          <IconButton aria-label="用户" $width={9}><SmallIcon name="users" size={9} /></IconButton>
          <IconButton aria-label="用户选项" $width={8}><Caret $muted /></IconButton>
          <IconButton aria-label="打开"><SmallIcon name="folder" size={10} /></IconButton>
          <IconButton aria-label="保存"><SmallIcon name="save" size={9} /></IconButton>
          <IconButton aria-label="保存设置"><SmallIcon name="saveSet" size={9} /></IconButton>
          <IconButton aria-label="撤消"><SmallIcon name="undo" size={8} /></IconButton>
          <IconButton aria-label="撤消选项" $width={9}><Caret $muted /></IconButton>
          <IconButton aria-label="重做"><SmallIcon name="redo" size={8} /></IconButton>
          <IconButton aria-label="固定"><SmallIcon name="pin" size={9} /></IconButton>
          <IconButton aria-label="打印"><SmallIcon name="print" size={10} /></IconButton>
          <IconButton aria-label="报表"><SmallIcon name="report" size={10} /></IconButton>
          <IconButton aria-label="自定义"><Caret /></IconButton>
        </QuickAccess>
        <AppTitle>仅导模.dgn [3D - V8 DGN] - ProStructures CONNECT Edition (技术预览)</AppTitle>
        <WindowControls>
          <IconButton aria-label="最小化"><ControlGlyph kind="min" /></IconButton>
          <IconButton aria-label="还原"><ControlGlyph kind="max" /></IconButton>
          <IconButton aria-label="关闭"><ControlGlyph kind="close" /></IconButton>
        </WindowControls>
      </TitleBar>
      <TabBar>
        <Tab $kind="file" $width={26}>文件</Tab>
        <Tab>主页</Tab>
        <Tab>视图</Tab>
        <Tab>曲线</Tab>
        <Tab $kind="active">实体</Tab>
        <Tab>曲面</Tab>
        <Tab>网格</Tab>
        <Tab>内容</Tab>
        <Tab>分析</Tab>
        <Tab>约束</Tab>
        <Tab $width={42}>实用工具</Tab>
        <Tab $width={44}>绘图辅助</Tab>
        <Tab $width={74}>CONNECT Services</Tab>
        <TabTools>
          <SearchBox>
            <input aria-label="搜索功能区" placeholder="搜索功能区 (F4)" />
            <SmallIcon name="search" size={8} />
            <Caret $muted />
          </SearchBox>
          <SignIn>登录</SignIn>
          <IconButton $width={9} aria-label="折叠功能区">
            <Svg $size={7} viewBox="0 0 8 8" aria-hidden="true"><path d="m1 5.500 3-3 3 3" fill="none" stroke="#555" strokeWidth="1.300" /></Svg>
          </IconButton>
          <IconButton aria-label="CONNECT"><SmallIcon name="connect" size={9} /></IconButton>
          <IconButton aria-label="帮助"><SmallIcon name="help" size={9} /></IconButton>
        </TabTools>
      </TabBar>
      <RibbonPanel />
      <Workspace>
        <Palette>
          <PaletteButton aria-label="旋转视图">
            <Svg $size={14} viewBox="0 0 16 16" aria-hidden="true">
              <path d="M9 1q6 1 6 7t-7 7l0-3q4-1 4-4t-4-4z" fill={deep} />
              <path d="m0 6 7-6v3l2 1v3H7v4z" fill={sky} /><path d="m3 13 6-4v7z" fill={deep} />
            </Svg>
          </PaletteButton>
          <PaletteRule />
          <PaletteButton aria-label="顶视图"><ViewCube faces={["top"]} /></PaletteButton>
          <PaletteButton aria-label="前视图"><ViewCube faces={["front"]} /></PaletteButton>
          <PaletteButton aria-label="右视图"><ViewCube faces={["right"]} /></PaletteButton>
          <PaletteButton aria-label="轴测图"><ViewCube faces={["front", "right"]} /></PaletteButton>
          <PaletteRule />
          <PaletteButton aria-label="底视图"><ViewCube faces={["bottom"]} /></PaletteButton>
          <PaletteButton aria-label="后视图"><ViewCube faces={["back", "left"]} /></PaletteButton>
          <PaletteButton aria-label="左视图"><ViewCube faces={["left"]} /></PaletteButton>
          <PaletteButton aria-label="右轴测图"><ViewCube faces={["left", "front"]} /></PaletteButton>
        </Palette>
        <ViewGrid>
          <DrawingView title="视图 1, 楼梯" tall>
            <IsometricDrawing />
            <SelectionDialog />
          </DrawingView>
          <DrawingView title="视图 2 - 顶视图, 楼梯" focused><TopDrawing /></DrawingView>
          <DrawingView title="视图 3 - 前视图, 楼梯"><FrontDrawing /></DrawingView>
        </ViewGrid>
      </Workspace>
      <BottomBar>
        <BarSection>
          <Grip />
          <LockToggle aria-label="精确绘图"><SmallIcon name="accu" size={13} /></LockToggle>
          <LockToggle aria-label="捕捉"><SmallIcon name="snapOff" size={13} /></LockToggle>
          <LockToggle aria-label="弹出"><SmallIcon name="dots" size={13} /></LockToggle>
          <LockToggle aria-label="标签"><SmallIcon name="tags" size={13} /></LockToggle>
          <Grip />
          <IconButton $width={18} aria-label="后退"><SmallIcon name="back" size={14} /></IconButton>
          <IconButton $width={6} aria-label="后退选项"><Caret /></IconButton>
          <IconButton $width={18} aria-label="前进"><SmallIcon name="forward" size={14} /></IconButton>
          <IconButton $width={6} aria-label="前进选项"><Caret $muted /></IconButton>
          <IconButton $width={18} aria-label="模型"><SmallIcon name="model" size={14} /></IconButton>
          <IconButton $width={6} aria-label="模型选项"><Caret /></IconButton>
          <ViewGroupBox>
            <SmallIcon name="windows" size={10} />
            <PlainSelect aria-label="视图组" defaultValue="楼梯 视图"><option>楼梯 视图</option></PlainSelect>
            <Caret />
          </ViewGroupBox>
          <IconButton $width={14} aria-label="管理视图组"><SmallIcon name="windows" size={14} /></IconButton>
          <NumberStrip>
            {[1, 2, 3, 4, 5, 6, 7, 8].map((n) => <ViewNumber key={n} $on={n <= 3} aria-pressed={n <= 3}>{n}</ViewNumber>)}
          </NumberStrip>
          <Grip />
          <Coordinate>X<input defaultValue="-942" /></Coordinate>
          <Coordinate>Y<input defaultValue="3530" /></Coordinate>
          <Coordinate>Z<input defaultValue="750" /></Coordinate>
        </BarSection>
      </BottomBar>
      <StatusBar>
        <StatusPrompt>选择元素 &gt; 标识要添加到集中的元素</StatusPrompt>
        <Grip />
        <StatusCell $width={16} $edge="faint" />
        <StatusCell />
        <StatusCell $width={122} $gap={6}>
          <SmallIcon name="snap" size={15} />
          <SmallIcon name="lock" size={8} />
          <span>0</span>
        </StatusCell>
        <StatusCell $width={75} />
        <StatusCell $width={57} />
        <StatusCell $width={20}><SmallIcon name="sheet" size={11} /></StatusCell>
        <StatusCell $width={20} $edge="faint"><SmallIcon name="fence" size={11} /></StatusCell>
        <StatusCell $width={18} $edge="faint" />
        <StatusCell $width={40} $edge="faint"><SmallIcon name="book" size={10} /></StatusCell>
        <StatusCell $width={19} $edge="faint"><SmallIcon name="faded" size={11} /></StatusCell>
      </StatusBar>
    </AppFrame>
  );
}
